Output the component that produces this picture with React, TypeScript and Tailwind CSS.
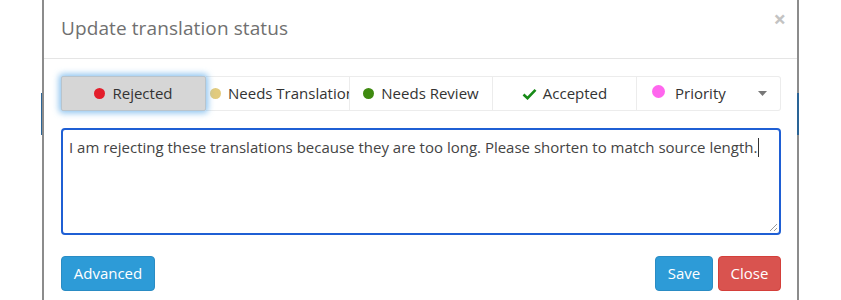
import React from "react";

function Dot({ color, size = 11 }: { color: string; size?: number }) {
  return (
    <span
      className="inline-block rounded-full shrink-0"
      style={{ width: size, height: size, backgroundColor: color }}
    />
  );
}

export default function App() {
  return (
    <div className="w-[841px] h-[300px] bg-white flex overflow-hidden font-['Open_Sans',sans-serif] text-[#333]">
      {/* background page left */}
      <div className="w-[42px] flex flex-col">
        <div className="h-[93px]" />
        <div className="h-[42px] flex justify-end">
          <div className="w-[1px] bg-[#2a6496]" />
        </div>
      </div>
      <div className="w-[2px] bg-[#8c8c8c]" />
      {/* modal */}
      <div className="w-[753px] bg-white flex flex-col">
        <div className="h-[59px] pl-[17px] pr-[11px] flex justify-between border-b border-[#e5e5e5]">
          <div className="text-[19px] text-[#707070] self-center pb-[1px] tracking-[0.1px]">
            Update translation status
          </div>
          <div className="text-[22px] leading-none font-bold text-[#c3c3c3] mt-[7px]">×</div>
        </div>
        <div className="pl-[17px] pr-[16px] pt-[17px] flex flex-col">
          <div className="flex h-[35px] text-[15px]">
            <div className="w-[145px] h-[35px] flex items-center justify-center gap-[7px] bg-[#d6d6d6] border border-[#b9c4cc] rounded-[2px] shadow-[0_0_6px_2px_rgba(102,175,233,0.75)] relative z-10">
              <Dot color="#e31e2b" />
              <span>Rejected</span>
            </div>
            <div className="w-[144px] h-[35px] border-y border-r border-[#ececec] overflow-hidden whitespace-nowrap pl-[4px] flex items-center gap-[7px]">
              <Dot color="#e2cb7e" />
              <span>Needs Translation</span>
            </div>
            <div className="w-[143px] h-[35px] border-y border-r border-[#ececec] flex items-center justify-center gap-[7px]">
              <Dot color="#3f8a10" />
              <span>Needs Review</span>
            </div>
            <div className="w-[144px] h-[35px] border-y border-r border-[#ececec] flex items-center justify-center gap-[6px]">
              <svg width="15" height="12" viewBox="0 0 15 12">
                <path d="M1.5 6.5 L5.5 10.2 L13.5 1.8" fill="none" stroke="#178a17" strokeWidth="2.6" />
              </svg>
              <span>Accepted</span>
            </div>
            <div className="w-[144px] h-[35px] border-y border-r border-[#ececec] rounded-r-[3px] flex items-center pl-[15px] pr-[13px]">
              <span className="mb-[3px]">
                <Dot color="#ff66ee" size={13} />
              </span>
              <span className="ml-[10px]">Priority</span>
              <span className="ml-auto">
                <svg width="9" height="5" viewBox="0 0 9 5">
                  <path d="M0 0 L9 0 L4.5 5 Z" fill="#777" />
                </svg>
              </span>
            </div>
          </div>
          <div className="mt-[17px] h-[107px] border-2 border-[#1f5fd4] rounded-[4px] relative pl-[6px] pt-[7px] text-[15px] leading-[20px] text-[#444]">
            I am rejecting these translations because they are too long. Please shorten to match source length.
            <span className="inline-block w-[1px] h-[19px] bg-[#333] align-middle ml-[1px] -mt-[2px]" />
            <svg className="absolute right-[1px] bottom-[1px]" width="10" height="10" viewBox="0 0 10 10">
              <path d="M9 2 L2 9 M9 6 L6 9" stroke="#999" strokeWidth="1" />
            </svg>
          </div>
          <div className="mt-[21px] flex items-center text-[15px] text-white">
            <div className="w-[94px] h-[35px] bg-[#2d9bd7] border border-[#2a8cc4] rounded-[4px] flex items-center justify-center">
              Advanced
            </div>
            <div className="ml-auto w-[58px] h-[35px] bg-[#2d9bd7] border border-[#2a8cc4] rounded-[4px] flex items-center justify-center">
              Save
            </div>
            <div className="ml-[5px] w-[63px] h-[35px] bg-[#d9534f] border border-[#d43f3a] rounded-[4px] flex items-center justify-center">
              Close
            </div>
          </div>
        </div>
      </div>
      <div className="w-[2px] bg-[#8c8c8c] flex flex-col">
        <div className="h-[93px]" />
        <div className="h-[42px] bg-[#2a6496]" />
      </div>
      <div className="flex-1" />
    </div>
  );
}
